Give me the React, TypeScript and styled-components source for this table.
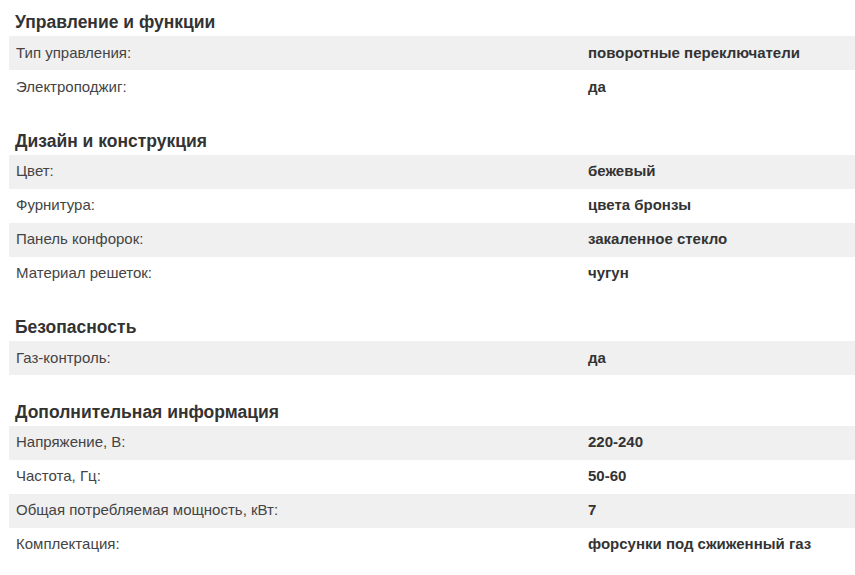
import React from 'react';
import styled, { createGlobalStyle } from 'styled-components';

type Spec = { label: string; value: string };
type Section = { title: string; rows: Spec[] };

const sections: Section[] = [
  {
    title: 'Управление и функции',
    rows: [
      { label: 'Тип управления:', value: 'поворотные переключатели' },
      { label: 'Электроподжиг:', value: 'да' },
    ],
  },
  {
    title: 'Дизайн и конструкция',
    rows: [
      { label: 'Цвет:', value: 'бежевый' },
      { label: 'Фурнитура:', value: 'цвета бронзы' },
      { label: 'Панель конфорок:', value: 'закаленное стекло' },
      { label: 'Материал решеток:', value: 'чугун' },
    ],
  },
  {
    title: 'Безопасность',
    rows: [{ label: 'Газ-контроль:', value: 'да' }],
  },
  {
    title: 'Дополнительная информация',
    rows: [
      { label: 'Напряжение, В:', value: '220-240' },
      { label: 'Частота, Гц:', value: '50-60' },
      { label: 'Общая потребляемая мощность, кВт:', value: '7' },
      { label: 'Комплектация:', value: 'форсунки под сжиженный газ' },
    ],
  },
];

const App = () => {
  return (
    <>
      <GlobalStyle />
      <Page>
        {sections.map((s) => (
          <Block key={s.title}>
            <Title>{s.title}</Title>
            {s.rows.map((r, i) => (
              <Row key={r.label} $striped={i % 2 === 0}>
                <Label>{r.label}</Label>
                <Value>{r.value}</Value>
              </Row>
            ))}
          </Block>
        ))}
      </Page>
    </>
  );
};

export default App;

const GlobalStyle = createGlobalStyle`
  body {
    margin: 0;
    background: #fff;
    font-family: "Liberation Sans", Arial, sans-serif;
  }
`;

const Page = styled.div`
  padding: 8px 0 0 9px;
  display: flex;
  flex-direction: column;
  gap: 22.5px;
`;

const Block = styled.section`
  display: flex;
  flex-direction: column;
`;

const Title = styled.h3`
  margin: 0;
  padding: 1px 0 0 6px;
  box-sizing: border-box;
  height: 28px;
  line-height: 27px;
  font-size: 17.5px;
  font-weight: bold;
  color: #333;
`;

const Row = styled.div<{ $striped: boolean }>`
  display: grid;
  grid-template-columns: 579px 1fr;
  box-sizing: border-box;
  height: 34px;
  padding-bottom: 2px;
  align-items: center;
  background: ${(p) => (p.$striped ? '#f0f0f0' : 'transparent')};
`;

const Label = styled.div`
  padding-left: 7px;
  font-size: 15px;
  color: #444;
`;

const Value = styled.div`
  font-size: 15px;
  font-weight: bold;
  color: #333;
`;
